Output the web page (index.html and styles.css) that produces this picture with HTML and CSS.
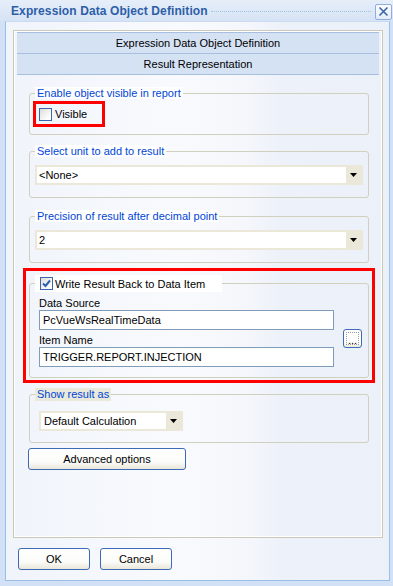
FILE: index.html
```html
<!DOCTYPE html>
<html lang="en">

<head>
    <meta charset="UTF-8">
    <meta name="viewport" content="width=device-width, initial-scale=1.0">
    <title>Expression Data Object Definition</title>
    <link rel="stylesheet" href="styles.css">
</head>

<body>
    <div class="window">
        <div class="titlebar">
            <span class="title">Expression Data Object Definition</span>
            <span class="title-dots"></span>
            <span class="close">
                <svg width="11" height="11" viewBox="0 0 11 11">
                    <path d="M1.5 1.5L9.5 9.5M9.5 1.5L1.5 9.5" stroke="#3b64a8" stroke-width="1.6" fill="none" />
                </svg>
            </span>
        </div>

        <div class="frame">
            <div class="panel">
                <div class="tab-header">Expression Data Object Definition</div>
                <div class="tab-header last">Result Representation</div>

                <div class="panel-body">
                    <!-- Visibility -->
                    <fieldset class="group g-visible">
                        <legend>Enable object visible in report</legend>
                        <div class="group-body">
                            <label class="check mark-visible"><span class="box"></span>Visible</label>
                        </div>
                    </fieldset>

                    <!-- Unit -->
                    <fieldset class="group g-unit">
                        <legend>Select unit to add to result</legend>
                        <div class="group-body">
                            <div class="combo">
                                <span class="combo-text">&lt;None&gt;</span>
                                <span class="drop"><svg width="7" height="4" viewBox="0 0 7 4"><path d="M0 0H7L3.5 4Z" fill="#000" /></svg></span>
                            </div>
                        </div>
                    </fieldset>

                    <!-- Precision -->
                    <fieldset class="group g-precision">
                        <legend>Precision of result after decimal point</legend>
                        <div class="group-body">
                            <div class="combo">
                                <span class="combo-text">2</span>
                                <span class="drop"><svg width="7" height="4" viewBox="0 0 7 4"><path d="M0 0H7L3.5 4Z" fill="#000" /></svg></span>
                            </div>
                        </div>
                    </fieldset>

                    <!-- Write back (highlighted) -->
                    <div class="mark-write">
                        <fieldset class="group g-write">
                            <legend class="legend-check">
                                <span class="box checked">
                                    <svg width="11" height="11" viewBox="0 0 11 11"><path d="M2 5.5L4.5 8L9 2.5" stroke="#2c5fb3" stroke-width="2" fill="none" /></svg>
                                </span>Write Result Back to Data Item
                            </legend>
                            <div class="group-body write-grid">
                                <span class="field-label">Data Source</span>
                                <div class="textbox">PcVueWsRealTimeData</div>
                                <span class="field-label second">Item Name</span>
                                <div class="textbox">TRIGGER.REPORT.INJECTION</div>
                                <button class="browse"><span>...</span></button>
                            </div>
                        </fieldset>
                    </div>

                    <!-- Show result -->
                    <fieldset class="group g-show">
                        <legend class="legend-beige">Show result as</legend>
                        <div class="group-body">
                            <div class="combo small">
                                <span class="combo-text">Default Calculation</span>
                                <span class="drop"><svg width="7" height="4" viewBox="0 0 7 4"><path d="M0 0H7L3.5 4Z" fill="#000" /></svg></span>
                            </div>
                        </div>
                    </fieldset>

                    <button class="btn advanced">Advanced options</button>
                </div>
            </div>

            <div class="dialog-buttons">
                <button class="btn">OK</button>
                <button class="btn">Cancel</button>
            </div>
        </div>
    </div>
</body>

</html>
```

FILE: styles.css
```css
body {
    margin: 0;
    width: 393px;
    height: 586px;
    background-color: #d2e1f5;
    font-family: "Liberation Sans", Arial, sans-serif;
    font-size: 11px;
    color: #000;
    overflow: hidden;
}

.window {
    display: flex;
    flex-direction: column;
}

/* title bar */
.titlebar {
    height: 21px;
    display: flex;
    align-items: center;
    padding-left: 11px;
    background: linear-gradient(#e6eef9, #d6e3f5);
}

.title {
    font-weight: bold;
    font-size: 12px;
    color: #2d5ea8;
    letter-spacing: 0.1px;
}

.title-dots {
    flex: 1;
    height: 0;
    border-top: 1px dotted #a7bfe3;
    margin: 1px 4px 0 3px;
}

.close {
    width: 15px;
    height: 14px;
    margin-right: 1px;
    margin-top: 2px;
    border: 1px solid #8eaedd;
    border-radius: 2px;
    background: linear-gradient(#fbfcfe, #e4ecf8);
    display: flex;
    align-items: center;
    justify-content: center;
}

/* dialog frame */
.frame {
    margin-left: 5px;
    width: 385px;
    height: 560px;
    box-sizing: border-box;
    border: 1px solid #9dbde9;
    border-top-color: #c9daf1;
    padding: 8px 6px 0 7px;
    background: linear-gradient(90deg, #f0f4fb 0%, #f4f7fc 20%, #f8fafd 45%, #f5f7fc 62%, #edf1f9 72%, #ecf0f9 100%);
}

.panel {
    height: 508px;
    box-sizing: border-box;
    border: 1px solid #cbc8b8;
    box-shadow: inset 0 0 0 1px #fff;
    padding: 1px 3px;
}

.tab-header {
    height: 20px;
    line-height: 20px;
    text-align: center;
    background-color: #d5e2f4;
    border-top: 1px solid #a8bedf;
}

.tab-header.last {
    border-bottom: 1px solid #a8bedf;
}

.panel-body {
    display: flex;
    flex-direction: column;
    align-items: flex-start;
    padding: 0 10px 0 12px;
}

/* group boxes */
.group {
    margin: 0;
    padding: 0;
    width: 340px;
    box-sizing: border-box;
    border: 1px solid #d0d0bf;
    border-radius: 3px;
    min-inline-size: 0;
}

.group legend {
    margin-left: 5px;
    padding: 0 2px;
    line-height: 12px;
    color: #0046d5;
    background-color: #fff;
}

.g-visible {
    margin-top: 12px;
}

.g-visible .group-body {
    padding: 2px 0 7px 3px;
}

.g-unit {
    margin-top: 10px;
}

.g-precision {
    margin-top: 12px;
}

.g-unit .group-body,
.g-precision .group-body {
    padding: 8px 5px 12px 5px;
}

/* checkbox */
.check {
    display: flex;
    align-items: center;
}

.box {
    width: 13px;
    height: 13px;
    box-sizing: border-box;
    border: 1px solid #3a68b0;
    background: linear-gradient(135deg, #dedcd3, #fff 80%);
    margin-right: 3px;
    display: flex;
    align-items: center;
    justify-content: center;
}

.mark-visible {
    width: 72px;
    height: 26px;
    box-sizing: border-box;
    border: 3px solid #ff0000;
    padding-left: 3px;
}

/* combo boxes */
.combo {
    height: 20px;
    box-sizing: border-box;
    border: 2px solid #ebe8d9;
    background-color: #fff;
    display: flex;
    align-items: center;
}

.combo-text {
    flex: 1;
    padding-left: 2px;
}

.drop {
    width: 15px;
    height: 16px;
    background-color: #ebe8da;
    display: flex;
    align-items: center;
    justify-content: center;
}

.combo.small {
    width: 144px;
}

.combo.small .combo-text {
    padding-left: 3px;
}

/* write back */
.mark-write {
    margin: 5px -6px 0 -6px;
    width: 352px;
    box-sizing: border-box;
    border: 3px solid #ff0000;
    padding: 4px 3px 2px 3px;
}

.legend-check {
    display: flex;
    align-items: center;
    height: 17px;
    width: 187px;
    box-sizing: border-box;
    padding-left: 5px !important;
    color: #000 !important;
}

.legend-check .box {
    margin-right: 2px;
}

.write-grid {
    display: grid;
    grid-template-columns: 295px 19px;
    column-gap: 9px;
    padding: 4px 0 10px 9px;
}

.field-label {
    height: 14px;
    line-height: 14px;
    grid-column: 1;
}

.field-label.second {
    margin-top: 3px;
}

.textbox {
    grid-column: 1;
    height: 20px;
    line-height: 18px;
    box-sizing: border-box;
    border: 1px solid #7f9db9;
    background-color: #fff;
    padding-left: 3px;
}

.browse {
    grid-column: 2;
    grid-row: 2 / 5;
    align-self: center;
    width: 19px;
    height: 19px;
    box-sizing: border-box;
    padding: 2px;
    border: 1px solid #3d6cb6;
    border-radius: 3px;
    background: linear-gradient(#fff 70%, #ece9dc);
    font-family: "Liberation Sans", Arial, sans-serif;
    font-size: 11px;
    display: flex;
}

.browse span {
    flex: 1;
    border: 1px dotted #9a9a9a;
    display: flex;
    align-items: flex-end;
    justify-content: center;
    line-height: 8px;
    color: #000;
}

/* show result */
.g-show {
    margin-top: 5px;
}

.group .legend-beige {
    line-height: 13px;
    background-color: #e9eadc;
}

.g-show .group-body {
    padding: 10px 0 11px 9px;
}

/* buttons */
.btn {
    height: 22px;
    border: 1px solid #3c6bb5;
    border-radius: 3px;
    background: linear-gradient(#fff 0%, #fbfbf9 65%, #e9e6d9 100%);
    font-family: "Liberation Sans", Arial, sans-serif;
    font-size: 11px;
    color: #000;
    padding: 0;
}

.advanced {
    margin: 5px 0 0 -1px;
    width: 158px;
}

.dialog-buttons {
    display: flex;
    gap: 10px;
    margin: 10px 0 0 5px;
}

.dialog-buttons .btn {
    width: 72px;
}
```
